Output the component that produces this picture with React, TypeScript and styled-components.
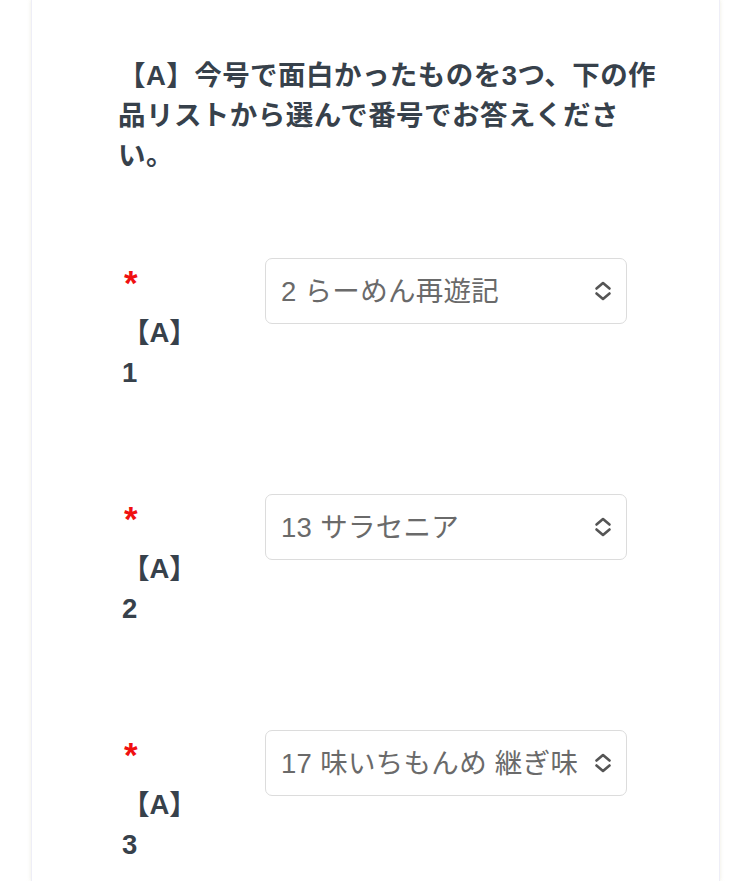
import React from "react";
import styled, { createGlobalStyle } from "styled-components";

const GlobalStyle = createGlobalStyle`
  html, body {
    margin: 0;
    padding: 0;
    background: #ffffff;
  }
  body {
    font-family: "Liberation Sans", "Noto Sans CJK JP", sans-serif;
  }
`;

const Card = styled.div`
  margin: 0 30px 0 31px;
  min-height: 881px;
  box-sizing: border-box;
  border-left: 1.5px solid #eeeef7;
  border-right: 1.5px solid #eeeef7;
  box-shadow: -1px 0 3px rgba(240, 238, 225, 0.5), 1px 0 3px rgba(240, 238, 225, 0.5);
  padding: 56px 40px 0 86px;
`;

const Title = styled.h2`
  margin: 0;
  width: 548px;
  font-size: 27.5px;
  letter-spacing: 0.45px;
  line-height: 40px;
  font-weight: 700;
  color: #37414b;
`;

const Form = styled.div`
  margin-top: 82px;
  display: flex;
  flex-direction: column;
  gap: 101px;
`;

const Row = styled.div`
  display: grid;
  grid-template-columns: 147px 362px;
  align-items: start;
`;

const Label = styled.label`
  display: block;
  padding-left: 4px;
  width: 82px;
  font-size: 27.5px;
  font-weight: 700;
  line-height: 40px;
  color: #37414b;
`;

const Required = styled.span`
  display: block;
  height: 40px;
  padding-left: 2px;
  color: #f01010;
  font-size: 35px;
  line-height: 50px;
  margin-bottom: 15px;
  font-weight: 700;
`;

const SelectWrap = styled.div`
  position: relative;
  width: 362px;
  height: 66px;
`;

const Select = styled.select`
  appearance: none;
  -webkit-appearance: none;
  width: 100%;
  height: 100%;
  box-sizing: border-box;
  border: 1.5px solid #dcdcdc;
  border-radius: 7px;
  background: #ffffff;
  padding: 0 48px 0 15px;
  font-family: "Liberation Sans", "Noto Sans CJK JP", sans-serif;
  font-size: 27.5px;
  letter-spacing: 0.3px;
  color: #6a6a6a;
  outline: none;
  white-space: nowrap;
  overflow: hidden;
`;

const Chevron = styled.svg`
  position: absolute;
  right: 15px;
  top: 50%;
  transform: translateY(-50%);
  pointer-events: none;
`;

const items = [
  { n: 1, value: "2 らーめん再遊記" },
  { n: 2, value: "13 サラセニア" },
  { n: 3, value: "17 味いちもんめ 継ぎ味" },
];

export default function App() {
  return (
    <>
      <GlobalStyle />
      <Card>
        <Title>【A】今号で面白かったものを3つ、下の作品リストから選んで番号でお答えください。</Title>
        <Form>
          {items.map((it) => (
            <Row key={it.n}>
              <Label>
                <Required>*</Required>
                【A】{it.n}
              </Label>
              <SelectWrap>
                <Select defaultValue={it.value}>
                  <option value={it.value}>{it.value}</option>
                </Select>
                <Chevron width="18" height="20" viewBox="0 0 18 20">
                  <path
                    d="M2.5 7.5 L9 2 L15.5 7.5 M2.5 12.5 L9 18 L15.5 12.5"
                    fill="none"
                    stroke="#555"
                    strokeWidth="2.6"
                    strokeLinecap="round"
                    strokeLinejoin="round"
                  />
                </Chevron>
              </SelectWrap>
            </Row>
          ))}
        </Form>
      </Card>
    </>
  );
}
